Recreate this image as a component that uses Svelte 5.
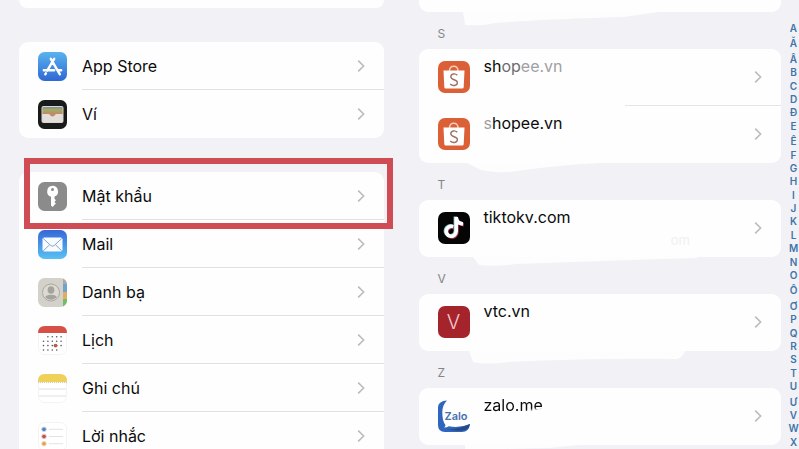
<script>
  const groups = [
    [{ name: 'App Store', icon: 'appstore' }, { name: 'Ví', icon: 'wallet' }],
    [
      { name: 'Mật khẩu', icon: 'key', marked: true },
      { name: 'Mail', icon: 'mail' },
      { name: 'Danh bạ', icon: 'contacts' },
      { name: 'Lịch', icon: 'calendar' },
      { name: 'Ghi chú', icon: 'notes' },
      { name: 'Lời nhắc', icon: 'reminders' }
    ]
  ];

  // Brushed-over areas, drawn from the bottom edge of each card.
  const sections = [
    { letter: 'S', sites: [{ parts: [['sh', ''], ['op', 'mid'], ['ee.vn', 'dim']], icon: 'shopee' }, { parts: [['s', 'dim'], ['hopee.vn', '']], icon: 'shopee' }],
      smear: 'M48 0 L62 7 Q84 11 98 8 Q140 2 182 0 Z' },
    { letter: 'T', sites: [{ parts: [['tiktokv.com', '']], icon: 'tiktok', rest: 'om' }],
      smear: 'M54 0 L60 8 Q75 10 98 7 Q180 4 278 1 V0 Z' },
    { letter: 'V', sites: [{ parts: [['vtc.vn', '']], icon: 'vtc' }],
      smear: 'M50 0 L54 11 Q65 14 90 11 Q180 7 258 8 Q265 5 266 0 Z' },
    { letter: 'Z', sites: [{ parts: [['zalo.me', '']], icon: 'zalo', wiped: true }],
      smear: 'M46 0 V5 Q80 4 130 3 L160 0 Z' }
  ];

  const index = [...'AĂÂBCDĐEÊFGHIJKLMNOÔƠPQRSTUƯVWX'];
  const tall = 'ĂÂÊÔƠƯ';
  const dots = [];
  for (let r = 0; r < 4; r++)
    for (let c = 0; c < 5; c++)
      if (!(r === 0 && c < 1) && !(r === 3 && c > 3)) dots.push([5.5 + c * 4.4, 10.8 + r * 4.4]);
  const note = 'M15.2 14.7a5 5 0 1 0 3 4.6V5M18.2 6q.8 5.500 6.8 6';
</script>

{#snippet chevron()}
  <svg class="chevron" viewBox="0 0 8 14" aria-hidden="true"><path d="M1.2 1.6 6.6 7 1.2 12.4" fill="none" stroke="#bcbcc0" stroke-width="1.6" /></svg>
{/snippet}

{#snippet glyph(icon)}
  {#if icon === 'appstore'}
    <svg class="icon" viewBox="0 0 29 29" aria-hidden="true">
      <defs><linearGradient id="as" x2="0" y2="1"><stop stop-color="#59b3ee" /><stop offset="1" stop-color="#2f68d4" /></linearGradient></defs>
      <rect width="29" height="29" rx="6.5" fill="url(#as)" />
      <g stroke="#fff" stroke-width="2.4" stroke-linecap="round" fill="none">
        <path d="M16.2 6.8 9.2 18.7M12.8 6.8 21.9 22.3M5.8 18.3H16.2M20.3 18.3H23.2M7.9 21.3 7.3 22.3" />
      </g>
    </svg>
  {:else if icon === 'wallet'}
    <svg class="icon" viewBox="0 0 29 29" aria-hidden="true">
      <rect width="29" height="29" rx="6.5" fill="#191b1b" />
      <rect x="3.5" y="6" width="22" height="17" rx="2" fill="#d9d7d0" />
      <rect x="4.5" y="7" width="20" height="3" rx="1" fill="#7896a2" />
      <rect x="4.5" y="8.6" width="20" height="3" fill="#b4a35a" />
      <rect x="4.5" y="10.6" width="20" height="3" fill="#9fa468" />
      <path d="M4.5 12.6h20v2H18q-1 2.400-3.500 2.400t-3.500-2.400H4.500z" fill="#c48a67" />
      <path d="M4.5 14h6q1 0 1.5 1 .8 1.500 2.500 1.500t2.500-1.500q.5-1 1.500-1h6v7q0 1-1 1h-17q-1 0-1-1z" fill="#e2dfda" />
    </svg>
  {:else if icon === 'key'}
    <svg class="icon" viewBox="0 0 29 29" aria-hidden="true">
      <rect width="29" height="29" rx="6.5" fill="#8b8b8c" />
      <path d="M14.5 3.8a5.6 5.6 0 0 1 2 10.8v2.2l1.4 1.5-1.5 1.6 1.5 1.7-1.5 1.5-1.7 2-1.700-1.700V14.700A5.6 5.6 0 0 1 14.500 3.800Z" fill="#fff" />
      <circle cx="14.5" cy="7.6" r="1.5" fill="#8b8b8c" />
    </svg>
  {:else if icon === 'mail'}
    <svg class="icon" viewBox="0 0 29 29" aria-hidden="true">
      <defs><linearGradient id="ml" x2="0" y2="1"><stop stop-color="#3567d8" /><stop offset="1" stop-color="#58c1f3" /></linearGradient></defs>
      <rect width="29" height="29" rx="6.5" fill="url(#ml)" />
      <rect x="4.5" y="7.5" width="20" height="14" rx="1.8" fill="#f8fbfe" />
      <path d="m5.200 8.500 7.600 7q1.700 1.400 3.400 0l7.600-7M5.300 20.800l6.200-6M23.700 20.800l-6.200-6" fill="none" stroke="#789bc6" stroke-width=".9" />
    </svg>
  {:else if icon === 'contacts'}
    <svg class="icon" viewBox="0 0 29 29" aria-hidden="true">
      <defs><clipPath id="cc"><rect width="29" height="29" rx="6.5" /></clipPath><clipPath id="cp"><circle cx="13" cy="14.5" r="7.3" /></clipPath></defs>
      <g clip-path="url(#cc)">
        <rect width="29" height="29" fill="#d3d1c9" />
        <path d="M25 0h4v6h-4z" fill="#a9aaa5" /><path d="M25 6h4v8h-4z" fill="#6fa5cc" /><path d="M25 14h4v7h-4z" fill="#e0ae60" /><path d="M25 21h4v8h-4z" fill="#72bd68" />
        <circle cx="13" cy="14.5" r="8.5" fill="#dcdad2" stroke="#aaa9a1" />
        <g clip-path="url(#cp)" fill="#a4a39c"><ellipse cx="13" cy="12" rx="3.4" ry="3.8" /><ellipse cx="13" cy="21.5" rx="7" ry="4.8" /></g>
      </g>
    </svg>
  {:else if icon === 'calendar'}
    <svg class="icon" viewBox="0 0 29 29" aria-hidden="true">
      <rect x=".5" y=".5" width="28" height="28" rx="6" fill="#fff" stroke="#f3f3f4" />
      <path d="M0 7q0-7 7-7h15q7 0 7 7z" fill="#d65045" />
      {#each dots as [x, y]}<circle cx={x} cy={y} r=".8" fill="#555" />{/each}
      <circle cx="17.5" cy="19.6" r="1.9" fill="#bd5a4c" />
    </svg>
  {:else if icon === 'notes'}
    <svg class="icon" viewBox="0 0 29 29" aria-hidden="true">
      <rect x=".5" y=".5" width="28" height="28" rx="6" fill="#fff" stroke="#f3f3f4" />
      <path d="M0 8V7q0-7 7-7h15q7 0 7 7v1z" fill="#efd058" />
      <path d="M0 8.5h29" stroke="#d6cba0" stroke-dasharray="1 1" />
      <path d="M1 15h27M1 22h27" stroke="#d8d8d8" stroke-width=".8" />
    </svg>
  {:else if icon === 'reminders'}
    <svg class="icon" viewBox="0 0 29 29" aria-hidden="true">
      <rect x=".5" y=".5" width="28" height="28" rx="6" fill="#fff" stroke="#f3f3f4" />
      <path d="M11 7.300h14M11 14.500h14M11 21.700h14" stroke="#dcdcdc" stroke-width=".8" />
      <g stroke-width="1"><circle cx="6" cy="7.3" r="2.3" fill="#4e83bd" stroke="#c7d8ea" /><circle cx="6" cy="14.5" r="2.3" fill="#bf5050" stroke="#edc6c6" /><circle cx="6" cy="21.7" r="2.3" fill="#e5a054" stroke="#f4dcc0" /></g>
    </svg>
  {:else if icon === 'shopee'}
    <svg class="site-icon" viewBox="0 0 32 32" aria-hidden="true">
      <rect width="32" height="32" rx="7" fill="#dc6037" />
      <path d="M11.500 10c0-6.500 8.500-6.500 8.500 0" fill="none" stroke="#f5cfc0" stroke-width="1.5" />
      <path d="M5.500 9.500h21L25.700 26q0 1.500-1.500 1.500H7.800q-1.500 0-1.500-1.500z" fill="#fff" />
      <path d="M19.300 14.200c-2.200-2.200-6.500-1.600-6.500 1.500 0 3.600 6.600 2.500 6.600 5.900 0 3.400-4.900 3.800-7.200 1.400" fill="none" stroke="#a06f60" stroke-width="1.4" />
    </svg>
  {:else if icon === 'tiktok'}
    <svg class="site-icon" viewBox="0 0 32 32" aria-hidden="true">
      <rect width="32" height="32" rx="7" fill="#050505" />
      <g fill="none" stroke-width="3.6">
        <path d={note} transform="translate(.8 .8)" stroke="#a83350" />
        <path d={note} transform="translate(-.8 -.5)" stroke="#7fc4c8" />
        <path d={note} stroke="#fff" />
      </g>
    </svg>
  {:else if icon === 'vtc'}
    <span class="site-icon letter" aria-hidden="true">V</span>
  {:else}
    <span class="site-icon zalo">
      <svg viewBox="0 0 32 32" aria-hidden="true">
        <path d="M9 .5Q4.500 5 4.300 12 4.200 21 7.500 25q-.5 2-1.500 2.500 3 0 5-1.200Q21 28.500 32 24q-1 8-8 8H7q-7 0-7-7V7Q.5 1 9 .5Z" fill="#2f66bd" />
        <path d="M8 29q12 1 24-5-1 5-5 6-5 2-19-1z" fill="#274a86" />
      </svg>
      <span>Zalo</span>
    </span>
  {/if}
{/snippet}

<main>
  <section class="settings" aria-label="Cài đặt">
    <div class="card stub"></div>
    {#each groups as rows}
      <ul class="card">
        {#each rows as row}
          <li class:marked={row.marked}>
            <a class="row" href="#{row.icon}">
              {@render glyph(row.icon)}
              <span class="label"><span>{row.name}</span>{@render chevron()}</span>
            </a>
          </li>
        {/each}
      </ul>
    {/each}
  </section>

  <section class="passwords" aria-label="Mật khẩu">
    <div class="card stub">
      <svg class="smear" width="362" height="18" aria-hidden="true"><path d="M44 0 L46 13 Q65 14 76 11 Q130 7 205 5 L240 0 Z" /></svg>
    </div>
    {#each sections as section}
      <h2>{section.letter}</h2>
      <div class="card">
        {#each section.sites as site}
          <a class="site" href="#{section.letter}">
            {@render glyph(site.icon)}
            <span class="domain"><span class:wiped={site.wiped}>{#each site.parts as [text, tone]}<span class={tone}>{text}</span>{/each}</span></span>
            {#if site.rest}<span class="rest">{site.rest}</span>{/if}
            {@render chevron()}
          </a>
        {/each}
        <svg class="smear" width="362" height="18" aria-hidden="true"><path d={section.smear} /></svg>
      </div>
    {/each}
    <nav aria-label="A–X">
      {#each index as letter}<a href="#{letter}" class:tall={tall.includes(letter)}>{letter}</a>{/each}
    </nav>
  </section>
</main>

<style>
  :global(body) { background: #f1f1f6; }
  main {
    display: grid;
    grid-template-columns: 1fr 1fr;
    height: 100vh;
    overflow: hidden;
    background: #f1f1f6;
    color: #0b0b0c;
    font: 16px/20px Inter, "Noto Sans", sans-serif;
  }
  section { min-width: 0; }
  a { color: inherit; text-decoration: none; }
  .settings { padding: 0 16px 0 19px; }
  .card { position: relative; margin: 0; padding: 0; list-style: none; background: #fefefe; border-radius: 9px; }
  .settings .card { margin-bottom: 34px; }
  .card.stub { height: 8px; border-radius: 0 0 9px 9px; }
  .row { display: flex; align-items: center; height: 48px; padding-left: 19px; }
  .icon { width: 29px; height: 29px; flex: none; }
  .label {
    flex: 1;
    align-self: stretch;
    display: flex;
    align-items: center;
    justify-content: space-between;
    margin-left: 15px;
    padding-right: 19px;
    border-bottom: 1px solid #e1e1e4;
  }
  li:last-child .label { border-bottom-color: transparent; }
  .chevron { width: 8px; height: 14px; flex: none; }
  .marked { position: relative; }
  .marked::after {
    content: "";
    position: absolute;
    z-index: 1;
    inset: -14px -9px -9px 5px;
    border: 6px solid #d04c54;
    pointer-events: none;
  }
  .passwords { position: relative; padding: 0 18px 0 19px; }
  .passwords .stub { height: 12px; }
  h2 { margin: 0; padding: 14px 19px 7px; font-size: 12px; line-height: 16px; font-weight: 400; color: #858589; }
  .site { display: flex; align-items: center; box-sizing: border-box; height: 57px; padding: 0 19px 2px; position: relative; }
  .site + .site::before { content: ""; position: absolute; top: -1px; left: 206px; right: 0; height: 1px; background: #e5e5e8; }
  .site-icon { width: 32px; height: 32px; flex: none; }
  .letter { display: grid; place-items: center; border-radius: 7px; background: #a5232b; color: #f3c9cb; font-size: 20px; font-weight: 300; }
  .zalo { position: relative; display: grid; place-items: center; }
  .zalo svg { position: absolute; inset: 0; }
  .zalo span { position: relative; padding-left: 5px; color: #4a72b0; font-size: 11px; font-weight: 600; line-height: 12px; }
  .domain { align-self: flex-start; flex: 1; margin: 7px 0 0 14px; }
  .mid { color: #6c6c70; }
  .dim { color: #a0a0a4; }
  .wiped { display: inline-block; -webkit-mask: linear-gradient(168deg, #000 72%, transparent 82%); }
  .rest { align-self: flex-end; margin: 0 64px 5px 0; font-size: 13px; color: #f0f0f1; }
  .smear { position: absolute; top: 100%; left: 0; z-index: 1; fill: #fdfdfe; }
  nav { position: absolute; right: 0; top: 22px; height: calc(100vh - 22px); width: 11px; display: flex; flex-direction: column; justify-content: space-between; }
  nav a { color: #3f76a8; font-size: 10px; font-weight: 600; line-height: 13px; text-align: center; }
  nav .tall { padding-top: 2px; }
</style>
